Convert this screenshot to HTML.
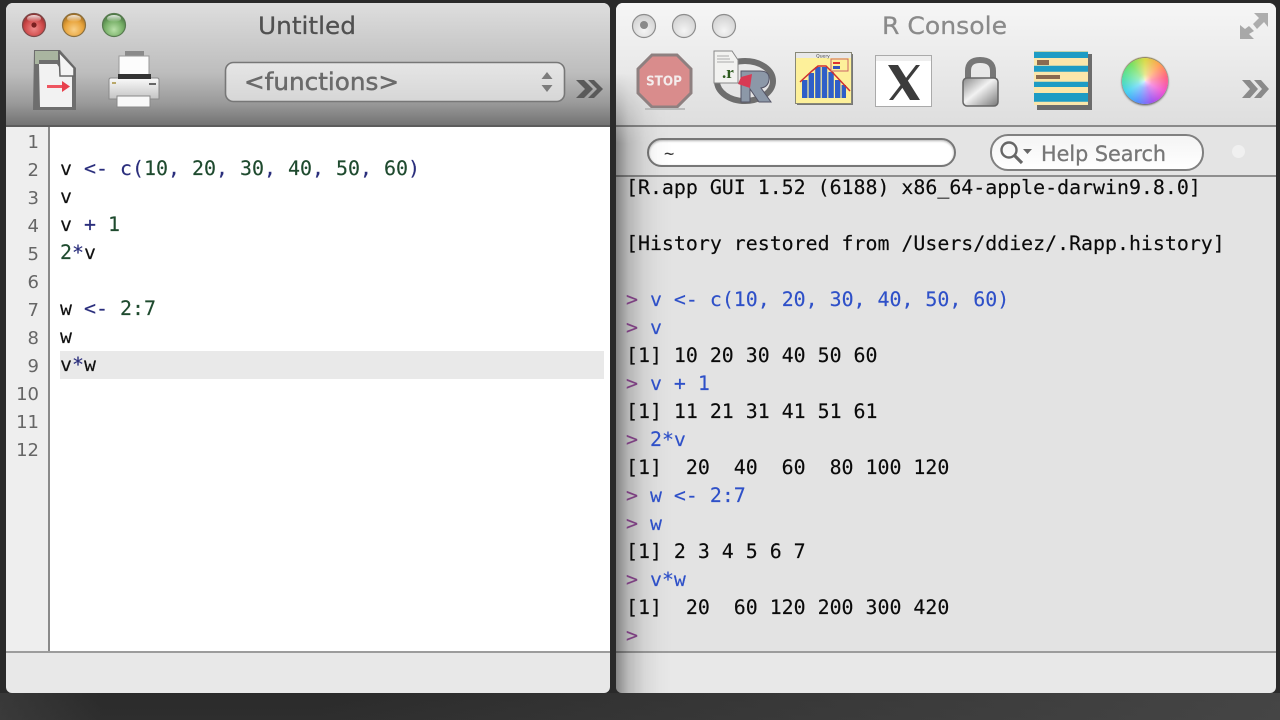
<!DOCTYPE html>
<html><head><meta charset="utf-8"><title>R</title>
<style>
html,body{margin:0;padding:0;width:1280px;height:720px;overflow:hidden;background:#2b2b2b}
#bg{position:absolute;left:0;top:0;width:1280px;height:720px;background:linear-gradient(180deg,#2a2a2a 0,#2a2a2a 690px,#2e2e2e 720px)}
#bg2{position:absolute;left:0;top:693px;width:1280px;height:27px;background:linear-gradient(90deg,rgba(70,70,70,.5),rgba(40,40,40,0) 8%,rgba(40,40,40,0) 25%,rgba(70,70,70,.45) 60%,rgba(75,75,75,.8) 100%)}
.a{position:absolute}
.win{position:absolute;top:3px;height:690px;border-radius:7px 7px 6px 6px;overflow:hidden}
#lw{left:6px;width:604px;background:#e8e8e8}
#rw{left:616px;width:660px;background:#e8e8e8}
.m{font-family:"DejaVu Sans Mono","Liberation Mono",monospace;font-size:19.93px;line-height:28px;white-space:pre;margin:0;-webkit-text-stroke:.15px currentColor}
.n{color:#2a2e7c}.g{color:#1e4a2e}.k{color:#111}
.p{color:#7c3f80}.b{color:#2e50c8}.o{color:#0a0a0a}
.gut{font-family:"DejaVu Sans",sans-serif;font-size:18px;line-height:28px;color:#666;text-align:right;white-space:pre}
.t{font-family:"DejaVu Sans",sans-serif;white-space:nowrap}
</style></head><body>
<div id="bg"></div><div id="bg2"></div>

<div class="win" id="lw">
  <div class="a" style="left:0;top:0;width:604px;height:123px;background:linear-gradient(180deg,#dedede 0,#d2d2d2 25px,#bdbdbd 70px,#9a9a9a 100px,#737373 122px)"></div>
  <div class="a" style="left:0;top:122px;width:604px;height:2px;background:#5c5c5c"></div>
  <div class="a" style="left:0;top:124px;width:604px;height:525px;background:#fff"></div>
  <div class="a" style="left:0;top:124px;width:42px;height:525px;background:#eeeeee"></div>
  <div class="a" style="left:42px;top:124px;width:2px;height:525px;background:#8a8a8a"></div>
  <div class="a" style="left:54px;top:348px;width:544px;height:28px;background:#e9e9e9"></div>
  <div class="a" style="left:0;top:648px;width:604px;height:2px;background:#9c9c9c"></div>
</div>

<div class="win" id="rw">
  <div class="a" style="left:0;top:0;width:660px;height:122px;background:linear-gradient(180deg,#f6f6f6 0,#eeeeee 40px,#dedede 122px)"></div>
  <div class="a" style="left:0;top:122px;width:660px;height:2px;background:#8a8a8a"></div>
  <div class="a" style="left:0;top:124px;width:660px;height:48px;background:#e4e4e4"></div>
  <div class="a" style="left:0;top:172px;width:660px;height:2px;background:#8e8e8e"></div>
  <div class="a" style="left:0;top:174px;width:660px;height:475px;background:#e3e3e3"></div>
  <div class="a" style="left:0;top:648px;width:660px;height:2px;background:#9c9c9c"></div>
  <div class="a" style="left:31px;top:135px;width:305px;height:25px;background:#fff;border:2px solid #777;border-radius:15px;box-shadow:inset 0 1px 2px rgba(0,0,0,.3)"></div>
  <div class="a" style="left:374px;top:131px;width:210px;height:33px;background:linear-gradient(#f4f4f4,#fff);border:2px solid #808080;border-radius:18px"></div>
  <div class="a" style="left:616px;top:142px;width:13px;height:13px;border-radius:50%;background:#f0f0f0"></div>
  <div class="a" style="left:0;top:70px;width:56px;height:620px;background:linear-gradient(90deg,rgba(0,0,0,.42),rgba(0,0,0,.2) 22%,rgba(0,0,0,.07) 50%,rgba(0,0,0,.02) 75%,rgba(0,0,0,0));-webkit-mask-image:linear-gradient(180deg,transparent 0,#000 70px)"></div>
</div>

<!-- titles -->
<svg class="a" style="left:0;top:0" width="1280" height="720" viewBox="0 0 1280 720">
<defs>
<radialGradient id="red" cx=".5" cy=".65" r=".65"><stop offset="0" stop-color="#ee8a8a"/><stop offset=".6" stop-color="#cf4a4a"/><stop offset="1" stop-color="#8a2a2a"/></radialGradient>
<radialGradient id="org" cx=".5" cy=".7" r=".65"><stop offset="0" stop-color="#f8d088"/><stop offset=".6" stop-color="#e8a43c"/><stop offset="1" stop-color="#a87020"/></radialGradient>
<radialGradient id="grn" cx=".5" cy=".7" r=".65"><stop offset="0" stop-color="#b8e0a8"/><stop offset=".6" stop-color="#78b068"/><stop offset="1" stop-color="#4c7a44"/></radialGradient>
<linearGradient id="hi" x1="0" y1="0" x2="0" y2="1"><stop offset="0" stop-color="#fff" stop-opacity=".85"/><stop offset="1" stop-color="#fff" stop-opacity="0"/></linearGradient>
<radialGradient id="gb" cx=".5" cy=".7" r=".7"><stop offset="0" stop-color="#f4f4f4"/><stop offset="1" stop-color="#cfcfcf"/></radialGradient>
<linearGradient id="lock" x1="0" y1="0" x2="1" y2="1"><stop offset="0" stop-color="#8a8a8a"/><stop offset=".45" stop-color="#f2f2f2"/><stop offset="1" stop-color="#777"/></linearGradient>
<linearGradient id="pr" x1="0" y1="0" x2="0" y2="1"><stop offset="0" stop-color="#fafafa"/><stop offset="1" stop-color="#c4c4c4"/></linearGradient>
<linearGradient id="pop" x1="0" y1="0" x2="0" y2="1"><stop offset="0" stop-color="#e6e6e6"/><stop offset="1" stop-color="#d6d6d6"/></linearGradient>
<radialGradient id="wh"><stop offset="0" stop-color="#fff" stop-opacity=".8"/><stop offset=".3" stop-color="#fff" stop-opacity=".4"/><stop offset="1" stop-color="#fff" stop-opacity="0"/></radialGradient>
</defs>

<!-- traffic lights -->
<circle cx="34" cy="25" r="11.5" fill="url(#red)" stroke="#7a4a4a" stroke-width="1.2"/>
<ellipse cx="34" cy="18.5" rx="7" ry="3.5" fill="url(#hi)"/><circle cx="34" cy="25" r="2.6" fill="#7a2020"/>
<circle cx="74" cy="25" r="11.5" fill="url(#org)" stroke="#8a7040" stroke-width="1.2"/>
<ellipse cx="74" cy="18.5" rx="7" ry="3.5" fill="url(#hi)"/>
<circle cx="114" cy="25" r="11.5" fill="url(#grn)" stroke="#587a50" stroke-width="1.2"/>
<ellipse cx="114" cy="18.5" rx="7" ry="3.5" fill="url(#hi)"/>

<circle cx="644" cy="26" r="11.5" fill="url(#gb)" stroke="#8c8c8c" stroke-width="1.2"/><circle cx="644" cy="25" r="4" fill="#8a8a8a"/>
<circle cx="684" cy="26" r="11.5" fill="url(#gb)" stroke="#8c8c8c" stroke-width="1.2"/>
<circle cx="724" cy="26" r="11.5" fill="url(#gb)" stroke="#8c8c8c" stroke-width="1.2"/>

<text x="258" y="34" class="t" font-size="24" fill="#505050" stroke="#505050" stroke-width=".25" textLength="98" lengthAdjust="spacingAndGlyphs">Untitled</text>
<text x="882" y="34" class="t" font-size="24" fill="#8a8a8a" stroke="#8a8a8a" stroke-width=".25" textLength="125" lengthAdjust="spacingAndGlyphs">R Console</text>

<!-- doc icon -->
<path d="M34 50H60L76 68V110H33Z" fill="#6e6e6e"/>
<path d="M35 51H58V60H39V64H35Z" fill="#a9b5a0"/>
<path d="M39 64H57L61 70H72V107H40Z" fill="#f2f2f2"/>
<path d="M59 52L74 68V76H60Z" fill="#f4f4f4" stroke="#666" stroke-width="1.5"/>
<path d="M47 86.5H64" stroke="#ee5560" stroke-width="3"/><path d="M62 81L70 86.5L62 92Z" fill="#e8404c"/>

<!-- printer -->
<rect x="125" y="51" width="19" height="6" fill="#8a8a8a"/>
<rect x="119" y="56" width="30" height="22" fill="#fcfcfc" stroke="#999"/>
<path d="M109 80Q109 78 111 78H157Q159 78 159 80V99H109Z" fill="url(#pr)" stroke="#8a8a8a"/>
<rect x="118" y="74" width="33" height="5" fill="#333"/>
<rect x="112" y="82" width="4" height="2" fill="#b9a86a"/><rect x="149" y="83" width="7" height="2" fill="#666"/>
<rect x="117" y="96" width="33" height="11" fill="#f8f8f8" stroke="#888"/>

<!-- popup -->
<rect x="225.5" y="62.5" width="339" height="39" rx="8" fill="url(#pop)" stroke="#777" stroke-width="1.6"/>
<text x="244" y="90" class="t" font-size="24" fill="#6a6a6a" stroke="#6a6a6a" stroke-width=".5" textLength="155" lengthAdjust="spacingAndGlyphs">&lt;functions&gt;</text>
<path d="M547 72L552.5 79H541.5Z M541.5 85H552.5L547 92Z" fill="#7c7c7c"/>
<!-- chevrons -->
<path d="M576 80H584L593 89L584 98H576L585 89Z" fill="#5a5a5a"/>
<path d="M588 80H594L603 89L594 98H588L597 89Z" fill="#5a5a5a"/>
<path d="M1242 80H1250L1258 89L1250 98H1242L1250 89Z" fill="#8a8a8a"/>
<path d="M1254 80H1261L1269 89L1261 98H1254L1262 89Z" fill="#8a8a8a"/>

<!-- stop -->
<path d="M652 55H677L691 69V93L677 107H652L638 93V69Z" fill="#d98c8c" stroke="#8e8080" stroke-width="3"/>
<text x="664" y="85.5" text-anchor="middle" class="t" font-size="13" font-weight="bold" fill="#f4ecec" textLength="36" lengthAdjust="spacingAndGlyphs" style="fill:#f4ecec">STOP</text>
<path d="M645 109H685" stroke="#bbb" stroke-width="2"/>

<!-- R doc icon -->
<ellipse cx="745" cy="81" rx="28" ry="20" fill="none" stroke="#6e6e6e" stroke-width="6"/>
<path d="M741 71H760Q770 71 769 80Q768 87 761 88L771 102H759L750 89V102H741Z" fill="#8c98a8" stroke="#556" stroke-width="1"/>
<path d="M741 77L752 74L750 88L738 84Z" fill="#d83a54"/>
<path d="M714 51H732L738 60V83H714Z" fill="#f2f2f0" stroke="#888"/>
<text x="722" y="78" font-family="Liberation Serif,serif" font-size="17" font-weight="bold" fill="#2d5a1e">.r</text>
<path d="M717 56H729M717 59H730M717 62H734" stroke="#aaa"/>

<!-- plot -->
<rect x="797" y="54" width="56" height="51" fill="#777"/>
<rect x="795.5" y="52.5" width="56" height="51" fill="#fdf09a" stroke="#887" stroke-width="1"/>
<rect x="796" y="53" width="55" height="5" fill="#e8e8e8"/>
<text x="823" y="57.5" text-anchor="middle" font-family="DejaVu Sans,sans-serif" font-size="4.5" fill="#444">Query</text>
<path d="M802 98V80h5.4V98zM808.6 98V73h5.4V98zM815.2 98V67h5.4V98zM821.8 98V67h5.4V98zM828.4 98V72h5.4V98zM835 98V80h5.4V98zM841.6 98V85h4.4V98z" fill="#2f5fc8"/>
<path d="M800 82L812 71L818 66L826 66L834 74L850 91" fill="none" stroke="#d03030" stroke-width="1.5"/>
<rect x="831" y="59" width="17" height="12" fill="#fdf09a" stroke="#c66"/>
<rect x="833" y="62" width="7" height="2" fill="#d33"/><rect x="833" y="66" width="7" height="3" fill="#35b"/>

<!-- X -->
<rect x="875.5" y="55.5" width="56" height="51" fill="#fff" stroke="#aaa"/>
<rect x="876" y="56" width="55" height="5" fill="#eee"/>
<path d="M888 65H898L920 100H910Z" fill="#3c3c3c"/><path d="M916 65H920L893 100H889Z" fill="#3c3c3c"/>

<!-- lock -->
<path d="M968 80V71Q968 60 980 60Q993 60 993 71V80" fill="none" stroke="#777" stroke-width="6"/>
<rect x="963" y="78" width="35" height="28" rx="4" fill="url(#lock)" stroke="#666" stroke-width="1.5"/>

<!-- stripes -->
<rect x="1037" y="54" width="55" height="56" fill="#6c6c6c"/>
<rect x="1034" y="51" width="54" height="54" fill="#fbe6aa"/>
<path d="M1034 51.7h54v6.3h-54zM1034 65.7h54v6h-54zM1034 81.7h54v5.3h-54zM1034 93h54v8.7h-54z" fill="#1e9cc4"/>
<path d="M1037 60h12v5h-12zM1036 75h24v4h-24z" fill="#8a6a50"/>

<!-- expand -->
<path d="M1254 13H1268V27L1264 22L1257 29L1253 24L1259 18Z" fill="#adadad"/>
<path d="M1240 25L1245 29L1249 26L1254 31L1249 34L1254 39H1240Z" fill="#a8a8a8"/>

<!-- magnifier -->
<circle cx="1009" cy="150" r="7.5" fill="none" stroke="#666" stroke-width="2.4"/>
<path d="M1014 155L1022 163" stroke="#666" stroke-width="3.2"/>
<path d="M1023 149H1032L1027.5 154Z" fill="#666"/>
<text x="1041" y="161" class="t" font-size="21" fill="#777" stroke="#777" stroke-width=".3" textLength="125" lengthAdjust="spacingAndGlyphs">Help Search</text>
<text x="664" y="159" font-family="DejaVu Sans Mono,monospace" font-size="17" fill="#333">~</text>
</svg>

<!-- colour wheel -->
<div class="a" style="left:1122px;top:58px;width:46px;height:46px;border-radius:50%;background:conic-gradient(from 0deg,#d8d840,#ffa050,#ff5f80,#f050d0,#a050f0,#5090ff,#40d0f0,#50e0a0,#70e060,#d8d840);box-shadow:0 1px 2px #444,0 -1px 1px #8a7a50"></div>
<svg class="a" style="left:1122px;top:58px" width="46" height="46"><circle cx="23" cy="23" r="23" fill="url(#wh)"/></svg>

<!-- gutter -->
<div class="a gut" style="left:6px;top:129px;width:33px">1
2
3
4
5
6
7
8
9
10
11
12</div>

<!-- editor -->
<pre class="a m" style="left:60px;top:155px"><span class="k">v</span> <span class="n">&lt;-</span> <span class="n">c(</span><span class="g">10</span><span class="n">,</span> <span class="g">20</span><span class="n">,</span> <span class="g">30</span><span class="n">,</span> <span class="g">40</span><span class="n">,</span> <span class="g">50</span><span class="n">,</span> <span class="g">60</span><span class="n">)</span>
<span class="k">v</span>
<span class="k">v</span> <span class="n">+</span> <span class="g">1</span>
<span class="g">2</span><span class="n">*</span><span class="k">v</span>

<span class="k">w</span> <span class="n">&lt;-</span> <span class="g">2:7</span>
<span class="k">w</span>
<span class="k">v</span><span class="n">*</span><span class="k">w</span></pre>

<!-- console -->
<pre class="a m" style="left:626px;top:174px;font-size:19.9px"><span class="o">[R.app GUI 1.52 (6188) x86_64-apple-darwin9.8.0]</span>

<span class="o">[History restored from /Users/ddiez/.Rapp.history]</span>

<span class="p">&gt;</span> <span class="b">v &lt;- c(10, 20, 30, 40, 50, 60)</span>
<span class="p">&gt;</span> <span class="b">v</span>
<span class="o">[1] 10 20 30 40 50 60</span>
<span class="p">&gt;</span> <span class="b">v + 1</span>
<span class="o">[1] 11 21 31 41 51 61</span>
<span class="p">&gt;</span> <span class="b">2*v</span>
<span class="o">[1]  20  40  60  80 100 120</span>
<span class="p">&gt;</span> <span class="b">w &lt;- 2:7</span>
<span class="p">&gt;</span> <span class="b">w</span>
<span class="o">[1] 2 3 4 5 6 7</span>
<span class="p">&gt;</span> <span class="b">v*w</span>
<span class="o">[1]  20  60 120 200 300 420</span>
<span class="p">&gt;</span></pre>
</body></html>
